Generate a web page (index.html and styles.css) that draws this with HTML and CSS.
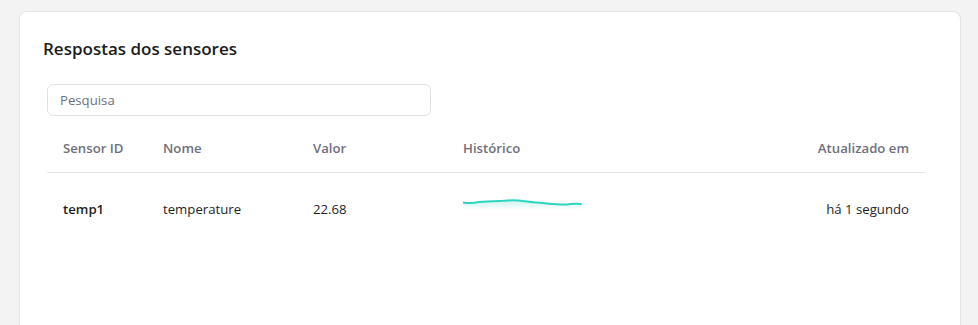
FILE: index.html
```html
<!DOCTYPE html>
<html lang="pt">

<head>
    <meta charset="UTF-8">
    <title>Respostas dos sensores</title>
    <link rel="stylesheet" href="styles.css">
</head>

<body>
    <div class="card">
        <h2 class="card-title">Respostas dos sensores</h2>
        <div class="search">
            <input type="text" class="search-input" placeholder="Pesquisa">
        </div>
        <table class="sensors">
            <thead>
                <tr>
                    <th class="col-id">Sensor ID</th>
                    <th class="col-name">Nome</th>
                    <th class="col-value">Valor</th>
                    <th class="col-history">Histórico</th>
                    <th class="col-updated">Atualizado em</th>
                </tr>
            </thead>
            <tbody>
                <tr>
                    <td class="col-id id">temp1</td>
                    <td class="col-name">temperature</td>
                    <td class="col-value">22.68</td>
                    <td class="col-history">
                        <svg class="spark" width="120" height="24" viewBox="0 0 120 24">
                            <defs>
                                <linearGradient id="sparkFill" x1="0" y1="0" x2="0" y2="1">
                                    <stop offset="0" stop-color="#2dd4bf" stop-opacity="0.25" />
                                    <stop offset="1" stop-color="#2dd4bf" stop-opacity="0" />
                                </linearGradient>
                            </defs>
                            <path d="M0 6.5 C6 7.5 10 7.5 16 6 C24 5 32 5 40 4.8 C46 4.3 50 3.8 56 4.5 C64 5.3 70 6.5 80 7 C90 8 96 8.8 104 8.5 C108 7.6 111 7.6 118 8 L118 14 L0 14 Z" fill="url(#sparkFill)" />
                            <path d="M0 6.5 C6 7.5 10 7.5 16 6 C24 5 32 5 40 4.8 C46 4.3 50 3.8 56 4.5 C64 5.3 70 6.5 80 7 C90 8 96 8.8 104 8.5 C108 7.6 111 7.6 118 8" fill="none" stroke="#2dd4bf" stroke-width="2" stroke-linecap="round" />
                        </svg>
                    </td>
                    <td class="col-updated">há 1 segundo</td>
                </tr>
            </tbody>
        </table>
    </div>
</body>

</html>
```

FILE: styles.css
```css
body {
    margin: 0;
    background-color: #f3f3f3;
    font-family: "Open Sans", "Noto Sans", sans-serif;
    color: #1f1f1f;
}

.card {
    margin: 11px 17px 0 19px;
    height: 340px;
    background-color: #ffffff;
    border: 1px solid #e4e4e4;
    border-radius: 8px;
    padding: 23px 35px 0 23px;
}

.card-title {
    margin: 0 0 21px 0;
    font-size: 17px;
    font-weight: 600;
    line-height: 28px;
    color: #1b1b1b;
}

.search {
    padding-left: 4px;
}

.search-input {
    box-sizing: border-box;
    width: 384px;
    height: 32px;
    border: 1px solid #e0e0e0;
    border-radius: 6px;
    padding: 0 12px;
    font-family: inherit;
    font-size: 13.2px;
    color: #333333;
    outline: none;
}

.search-input::placeholder {
    color: #6b7280;
}

.sensors {
    margin-left: 4px;
    margin-top: 8px;
    width: 878px;
    border-collapse: collapse;
    font-size: 13.2px;
}

.sensors th {
    text-align: left;
    font-weight: 600;
    color: #70707c;
    height: 48px;
    padding: 0 16px;
    border-bottom: 1px solid #e5e5e5;
}

.sensors td {
    height: 72px;
    padding: 0 16px;
    color: #1f1f1f;
}

.col-id {
    width: 68px;
}

.col-name {
    width: 118px;
}

.col-value {
    width: 118px;
}

.col-history {
    width: 200px;
}

.sensors .col-updated {
    text-align: right;
}

.sensors .id {
    font-weight: 600;
}

.spark {
    display: block;
    margin-top: -2px;
}
```
